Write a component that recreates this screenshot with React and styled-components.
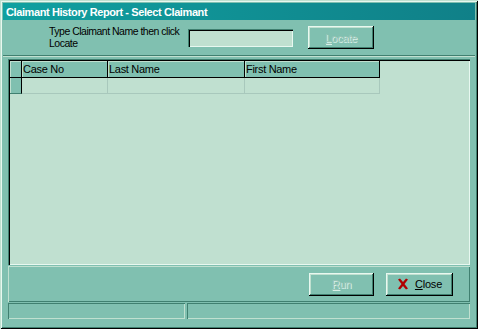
import React from "react";
import styled, { createGlobalStyle } from "styled-components";

const GlobalStyle = createGlobalStyle`
  body {
    margin: 0;
    background: #ffffff;
    font-family: "Liberation Sans", Arial, sans-serif;
  }
`;

const face = "#80c0b0";
const light = "#c0e0d0";
const shadow = "#408070";

export default function App() {
  return (
    <>
      <GlobalStyle />
      <Window>
        <TitleBar>Claimant History Report - Select Claimant</TitleBar>
        <TopPanel>
          <Label>
            Type Claimant Name then click
            <br />
            Locate
          </Label>
          <TextBox />
          <Button disabled $width={66}>
            <span>
              <u>L</u>ocate
            </span>
          </Button>
        </TopPanel>
        <Middle>
          <GridFrame>
            <Row>
              <HeadCell $width={10} />
              <HeadCell $width={84}>Case No</HeadCell>
              <HeadCell $width={135}>Last Name</HeadCell>
              <HeadCell $width={133}>First Name</HeadCell>
            </Row>
            <Row>
              <SelectorCell />
              <DataCell $width={84} />
              <DataCell $width={135} />
              <DataCell $width={133} />
            </Row>
          </GridFrame>
          <BottomPanel>
            <Button disabled $width={65}>
              <span>
                <u>R</u>un
              </span>
            </Button>
            <Button $width={67}>
              <CloseIcon viewBox="0 0 12 12">
                <path
                  d="M1 1.5 L3 0.5 L6 4 L9 0.5 L11 1.5 L7.5 6 L11 10.5 L9 11.5 L6 8 L3 11.5 L1 10.5 L4.5 6 Z"
                  fill="#b00000"
                />
              </CloseIcon>
              <span>
                <u>C</u>lose
              </span>
            </Button>
          </BottomPanel>
          <StatusBar>
            <StatusPanel $width={177} />
            <StatusPanel $grow />
          </StatusBar>
        </Middle>
      </Window>
    </>
  );
}

const Window = styled.div`
  width: 478px;
  height: 329px;
  box-sizing: border-box;
  padding: 3px;
  background: ${face};
  display: flex;
  flex-direction: column;
  box-shadow: inset 1px 1px ${light}, inset -1px -1px #000,
    inset 2px 2px #e8f8f0, inset -2px -2px ${shadow};
  font-size: 11px;
  color: #000;
`;

const TitleBar = styled.div`
  height: 17px;
  flex: none;
  display: flex;
  align-items: center;
  padding-left: 3px;
  background: linear-gradient(to right, #10a0a0, #108088);
  color: #fff;
  font-weight: bold;
  font-size: 11px;
  letter-spacing: -0.4px;
`;

const TopPanel = styled.div`
  height: 35px;
  flex: none;
  display: flex;
  align-items: center;
  padding-left: 46px;
  border-bottom: 1px solid ${shadow};
  box-shadow: 0 1px ${light};
`;

const Label = styled.div`
  width: 139px;
  line-height: 12px;
  align-self: flex-start;
  margin-top: 5px;
  white-space: nowrap;
  font-size: 10.5px;
  letter-spacing: -0.5px;
`;

const TextBox = styled.div`
  width: 105px;
  height: 18px;
  box-sizing: border-box;
  background: ${light};
  box-shadow: inset 1px 1px ${shadow}, inset 2px 2px #000,
    inset -1px -1px #e8f8f0, inset -2px -2px ${light};
  margin-right: 15px;
`;

const Button = styled.button`
  width: ${(p) => p.$width}px;
  height: 23px;
  box-sizing: border-box;
  border: none;
  padding: 0;
  background: ${face};
  font-family: "Liberation Sans", Arial, sans-serif;
  font-size: 11px;
  letter-spacing: -0.2px;
  color: #000;
  display: flex;
  align-items: center;
  justify-content: center;
  gap: 6px;
  box-shadow: inset -1px -1px #000, inset 1px 1px #e8f8f0,
    inset -2px -2px ${shadow}, inset 2px 2px ${light};

  &:disabled {
    color: #98c4b6;
    text-shadow: 1px 1px #d8f0e8;
  }
`;

const CloseIcon = styled.svg`
  width: 12px;
  height: 12px;
`;

const Middle = styled.div`
  flex: 1;
  display: flex;
  flex-direction: column;
  padding: 3px 5px 6px 5px;
  gap: 1px;
`;

const GridFrame = styled.div`
  height: 206px;
  flex: none;
  box-sizing: border-box;
  padding: 2px;
  background: ${light};
  box-shadow: inset 1px 1px ${shadow}, inset 2px 2px #000,
    inset -1px -1px #e8f8f0, inset -2px -2px ${light};
`;

const Row = styled.div`
  display: flex;
`;

const HeadCell = styled.div`
  width: ${(p) => p.$width}px;
  height: 16px;
  flex: none;
  background: ${face};
  border-right: 1px solid #000;
  border-bottom: 1px solid #000;
  box-shadow: inset 1px 1px ${light};
  padding-left: 1px;
  line-height: 16px;
  white-space: nowrap;
  letter-spacing: -0.3px;
`;

const SelectorCell = styled.div`
  width: 10px;
  height: 15px;
  flex: none;
  background: ${face};
  border-right: 1px solid #000;
  border-bottom: 1px solid ${shadow};
  box-shadow: inset 1px 0 ${light};
  padding-left: 1px;
`;

const DataCell = styled.div`
  width: ${(p) => p.$width}px;
  height: 15px;
  flex: none;
  padding-left: 1px;
  border-right: 1px solid #a8c8bc;
  border-bottom: 1px solid #a8c8bc;
`;

const BottomPanel = styled.div`
  height: 36px;
  flex: none;
  box-sizing: border-box;
  display: flex;
  align-items: center;
  justify-content: flex-end;
  gap: 12px;
  padding-right: 17px;
  box-shadow: inset 1px 1px ${light}, inset -1px -1px ${shadow};
`;

const StatusBar = styled.div`
  height: 16px;
  flex: none;
  display: flex;
  gap: 2px;
`;

const StatusPanel = styled.div`
  width: ${(p) => (p.$grow ? "auto" : `${p.$width}px`)};
  flex: ${(p) => (p.$grow ? 1 : "none")};
  box-shadow: inset 1px 1px ${shadow}, inset -1px -1px ${light};
`;
